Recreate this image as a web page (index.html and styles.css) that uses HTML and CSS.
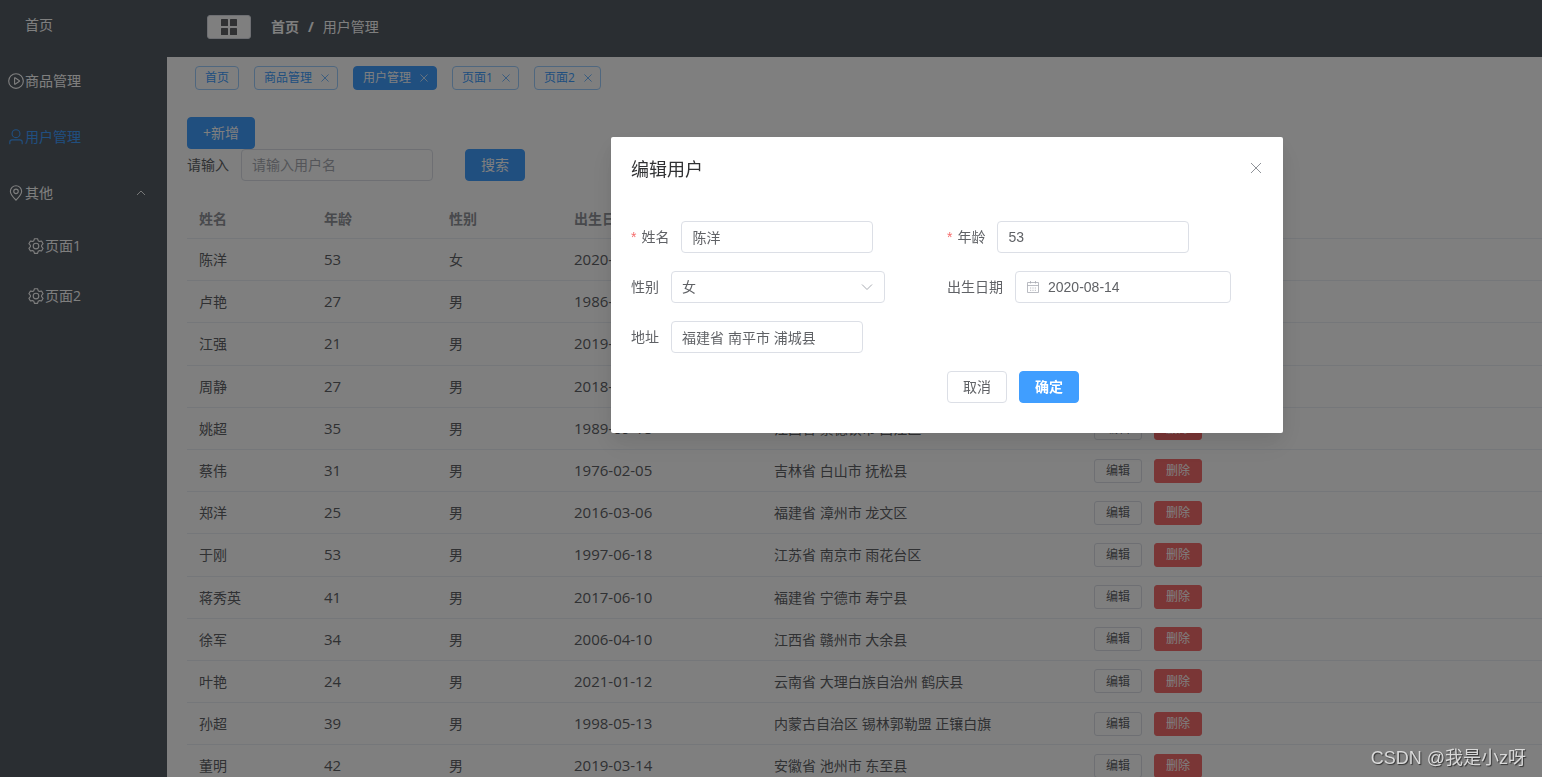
FILE: index.html
```html
<!DOCTYPE html>
<html lang="zh-CN">
<head>
<meta charset="utf-8">
<title>用户管理</title>
<link rel="stylesheet" href="styles.css">
</head>
<body>
<svg class="sprite" aria-hidden="true">
  <symbol id="i-play" viewBox="0 0 1024 1024"><path d="M512 64a448 448 0 1 1 0 896 448 448 0 0 1 0-896zm0 832a384 384 0 0 0 0-768 384 384 0 0 0 0 768zm-48-247.616L668.608 512 464 375.616v272.768zm10.624-342.656 249.472 166.336a48 48 0 0 1 0 79.872L474.624 718.272A48 48 0 0 1 400 678.336V345.6a48 48 0 0 1 74.624-39.872z"/></symbol>
  <symbol id="i-user" viewBox="0 0 1024 1024"><path d="M512 512a192 192 0 1 0 0-384 192 192 0 0 0 0 384zm0 64a256 256 0 1 1 0-512 256 256 0 0 1 0 512zm320 320v-96a96 96 0 0 0-96-96H288a96 96 0 0 0-96 96v96a32 32 0 1 1-64 0v-96a160 160 0 0 1 160-160h448a160 160 0 0 1 160 160v96a32 32 0 1 1-64 0z"/></symbol>
  <symbol id="i-location" viewBox="0 0 1024 1024"><path d="M800 416a288 288 0 1 0-576 0c0 118.144 94.528 272.128 288 456.576C705.472 688.128 800 534.144 800 416zM512 960C277.312 746.688 160 565.312 160 416a352 352 0 0 1 704 0c0 149.312-117.312 330.688-352 544z"/><path d="M512 512a96 96 0 1 0 0-192 96 96 0 0 0 0 192zm0 64a160 160 0 1 1 0-320 160 160 0 0 1 0 320z"/></symbol>
  <symbol id="i-setting" viewBox="0 0 1024 1024"><path d="M600.704 64a32 32 0 0 1 30.464 22.208l35.2 109.376c14.784 7.232 28.928 15.36 42.432 24.512l112.384-24.192a32 32 0 0 1 34.432 15.36L944.32 364.8a32 32 0 0 1-4.032 37.504l-77.12 85.12a357.12 357.12 0 0 1 0 49.024l77.12 85.248a32 32 0 0 1 4.032 37.504l-88.704 153.6a32 32 0 0 1-34.432 15.296L708.8 803.904c-13.44 9.088-27.648 17.28-42.368 24.512l-35.264 109.376A32 32 0 0 1 600.704 960H423.296a32 32 0 0 1-30.464-22.208L357.696 828.48a351.616 351.616 0 0 1-42.56-24.64l-112.32 24.256a32 32 0 0 1-34.432-15.36L79.68 659.2a32 32 0 0 1 4.032-37.504l77.12-85.248a357.12 357.12 0 0 1 0-48.896l-77.12-85.248A32 32 0 0 1 79.68 364.8l88.704-153.6a32 32 0 0 1 34.432-15.296l112.32 24.256c13.568-9.152 27.776-17.408 42.56-24.64l35.2-109.312A32 32 0 0 1 423.232 64H600.64zm-23.424 64H446.72l-36.352 113.088-24.512 11.968a294.113 294.113 0 0 0-34.816 20.096l-22.656 15.36-116.224-25.088-65.28 113.152 79.68 88.192-1.92 27.136a293.12 293.12 0 0 0 0 40.192l1.92 27.136-79.808 88.192 65.344 113.152 116.224-25.024 22.656 15.296a294.113 294.113 0 0 0 34.816 20.096l24.512 11.968L446.72 896h130.688l36.48-113.152 24.448-11.904a288.282 288.282 0 0 0 34.752-20.096l22.592-15.296 116.288 25.024 65.28-113.152-79.744-88.192 1.92-27.136a293.12 293.12 0 0 0 0-40.256l-1.92-27.136 79.808-88.128-65.344-113.152-116.288 24.96-22.592-15.232a287.616 287.616 0 0 0-34.752-20.096l-24.448-11.904L577.344 128zM512 320a192 192 0 1 1 0 384 192 192 0 0 1 0-384zm0 64a128 128 0 1 0 0 256 128 128 0 0 0 0-256z"/></symbol>
  <symbol id="i-menu" viewBox="0 0 18 18"><rect x="1" y="1" width="7" height="7" rx=".6"/><rect x="10" y="1" width="7" height="7" rx=".6"/><rect x="1" y="10" width="7" height="7" rx=".6"/><rect x="10" y="10" width="7" height="7" rx=".6"/></symbol>
  <symbol id="i-up" viewBox="0 0 12 12"><path d="M2 8l4-4 4 4" fill="none" stroke="currentColor" stroke-width=".9"/></symbol>
  <symbol id="i-down" viewBox="0 0 14 14"><path d="m2 4.500 5 5 5-5" fill="none" stroke="currentColor"/></symbol>
  <symbol id="i-close" viewBox="0 0 14 14"><path d="m2 2 10 10M12 2 2 12" fill="none" stroke="currentColor"/></symbol>
  <symbol id="i-calendar" viewBox="0 0 14 14"><path d="M1.500 2.500h11v10h-11zM1.500 5.500h11M4.500 1v2.500M9.500 1v2.500M4 8h1.200M6.400 8h1.200M8.800 8h1.200M4 10.300h1.200M6.400 10.300h1.200M8.800 10.300h1.200" fill="none" stroke="currentColor" stroke-width=".8"/></symbol>
</svg>

<div class="app">
  <nav class="sidebar">
    <a class="menu-item no-icon" href="#">首页</a>
    <a class="menu-item" href="#"><svg class="icon"><use href="#i-play"/></svg>商品管理</a>
    <a class="menu-item active" href="#"><svg class="icon"><use href="#i-user"/></svg>用户管理</a>
    <button class="menu-item group" type="button"><svg class="icon"><use href="#i-location"/></svg>其他<svg class="arrow"><use href="#i-up"/></svg></button>
    <div class="submenu">
      <a class="menu-item" href="#"><svg class="icon"><use href="#i-setting"/></svg>页面1</a>
      <a class="menu-item" href="#"><svg class="icon"><use href="#i-setting"/></svg>页面2</a>
    </div>
  </nav>

  <div class="content">
    <header class="topbar">
      <button class="collapse" type="button" aria-label="折叠菜单"><svg class="icon"><use href="#i-menu"/></svg></button>
      <div class="breadcrumb"><a href="#">首页</a><span class="slash">/</span><span>用户管理</span></div>
    </header>

    <div class="tags">
      <a class="tag" href="#">首页</a>
      <a class="tag" href="#">商品管理<svg class="tag-close"><use href="#i-close"/></svg></a>
      <a class="tag current" href="#">用户管理<svg class="tag-close"><use href="#i-close"/></svg></a>
      <a class="tag" href="#">页面1<svg class="tag-close"><use href="#i-close"/></svg></a>
      <a class="tag" href="#">页面2<svg class="tag-close"><use href="#i-close"/></svg></a>
    </div>

    <main class="main">
      <button class="btn primary" type="button">+新增</button>
      <form class="search">
        <label for="keyword">请输入</label>
        <input class="input" id="keyword" type="text" placeholder="请输入用户名">
        <button class="btn primary" type="button">搜索</button>
      </form>

      <table class="table">
        <colgroup><col class="c-s"><col class="c-s"><col class="c-s"><col class="c-m"><col class="c-l"><col></colgroup>
        <thead><tr><th>姓名</th><th>年龄</th><th>性别</th><th>出生日期</th><th>地址</th><th>操作</th></tr></thead>
        <tbody>
          <tr><td>陈洋</td><td class="num">53</td><td>女</td><td class="num">2020-08-14</td><td>福建省 南平市 浦城县</td><td><div class="ops"><button class="btn small" type="button">编辑</button><button class="btn small danger" type="button">删除</button></div></td></tr>
          <tr><td>卢艳</td><td class="num">27</td><td>男</td><td class="num">1986-05-12</td><td>江苏省 南京市 玄武区</td><td><div class="ops"><button class="btn small" type="button">编辑</button><button class="btn small danger" type="button">删除</button></div></td></tr>
          <tr><td>江强</td><td class="num">21</td><td>男</td><td class="num">2019-07-21</td><td>福建省 漳州市 东山县</td><td><div class="ops"><button class="btn small" type="button">编辑</button><button class="btn small danger" type="button">删除</button></div></td></tr>
          <tr><td>周静</td><td class="num">27</td><td>男</td><td class="num">2018-11-02</td><td>江西省 赣州市 信丰县</td><td><div class="ops"><button class="btn small" type="button">编辑</button><button class="btn small danger" type="button">删除</button></div></td></tr>
          <tr><td>姚超</td><td class="num">35</td><td>男</td><td class="num">1989-09-18</td><td>江西省 景德镇市 昌江区</td><td><div class="ops"><button class="btn small" type="button">编辑</button><button class="btn small danger" type="button">删除</button></div></td></tr>
          <tr><td>蔡伟</td><td class="num">31</td><td>男</td><td class="num">1976-02-05</td><td>吉林省 白山市 抚松县</td><td><div class="ops"><button class="btn small" type="button">编辑</button><button class="btn small danger" type="button">删除</button></div></td></tr>
          <tr><td>郑洋</td><td class="num">25</td><td>男</td><td class="num">2016-03-06</td><td>福建省 漳州市 龙文区</td><td><div class="ops"><button class="btn small" type="button">编辑</button><button class="btn small danger" type="button">删除</button></div></td></tr>
          <tr><td>于刚</td><td class="num">53</td><td>男</td><td class="num">1997-06-18</td><td>江苏省 南京市 雨花台区</td><td><div class="ops"><button class="btn small" type="button">编辑</button><button class="btn small danger" type="button">删除</button></div></td></tr>
          <tr><td>蒋秀英</td><td class="num">41</td><td>男</td><td class="num">2017-06-10</td><td>福建省 宁德市 寿宁县</td><td><div class="ops"><button class="btn small" type="button">编辑</button><button class="btn small danger" type="button">删除</button></div></td></tr>
          <tr><td>徐军</td><td class="num">34</td><td>男</td><td class="num">2006-04-10</td><td>江西省 赣州市 大余县</td><td><div class="ops"><button class="btn small" type="button">编辑</button><button class="btn small danger" type="button">删除</button></div></td></tr>
          <tr><td>叶艳</td><td class="num">24</td><td>男</td><td class="num">2021-01-12</td><td>云南省 大理白族自治州 鹤庆县</td><td><div class="ops"><button class="btn small" type="button">编辑</button><button class="btn small danger" type="button">删除</button></div></td></tr>
          <tr><td>孙超</td><td class="num">39</td><td>男</td><td class="num">1998-05-13</td><td>内蒙古自治区 锡林郭勒盟 正镶白旗</td><td><div class="ops"><button class="btn small" type="button">编辑</button><button class="btn small danger" type="button">删除</button></div></td></tr>
          <tr><td>董明</td><td class="num">42</td><td>男</td><td class="num">2019-03-14</td><td>安徽省 池州市 东至县</td><td><div class="ops"><button class="btn small" type="button">编辑</button><button class="btn small danger" type="button">删除</button></div></td></tr>
        </tbody>
      </table>
    </main>
  </div>
</div>

<div class="overlay">
  <section class="dialog" role="dialog" aria-labelledby="dialog-title">
    <header class="dialog-head">
      <h2 id="dialog-title">编辑用户</h2>
      <button class="dialog-close" type="button" aria-label="关闭"><svg class="icon"><use href="#i-close"/></svg></button>
    </header>
    <form class="dialog-form">
      <div class="field"><label class="required" for="name">姓名</label><input class="input" id="name" type="text" value="陈洋"></div>
      <div class="field"><label class="required" for="age">年龄</label><input class="input" id="age" type="text" value="53"></div>
      <div class="field"><label for="sex">性别</label>
        <div class="select-box"><select class="input" id="sex"><option>女</option><option>男</option></select><svg class="select-arrow"><use href="#i-down"/></svg></div>
      </div>
      <div class="field"><label for="birth">出生日期</label>
        <div class="input date-box"><svg class="date-icon"><use href="#i-calendar"/></svg><input id="birth" type="text" value="2020-08-14"></div>
      </div>
      <div class="field address"><label for="addr">地址</label><input class="input" id="addr" type="text" value="福建省 南平市 浦城县"></div>
      <div class="actions"><button class="btn" type="button">取消</button><button class="btn primary confirm" type="button">确定</button></div>
    </form>
  </section>
</div>
<div class="watermark">CSDN @我是小z呀</div>
</body>
</html>
```

FILE: styles.css
```css
* { box-sizing: border-box; }
html, body { height: 100%; margin: 0; }
body {
  overflow: hidden;
  font: 14px/20px "Open Sans", "Noto Sans CJK SC", sans-serif;
  color: #606266;
  background: #fff;
}
a { color: inherit; text-decoration: none; }
button, input, select { font: inherit; color: inherit; margin: 0; }
button { cursor: pointer; }
svg { flex: none; fill: currentColor; }
.sprite { position: absolute; width: 0; height: 0; }
.icon { width: 18px; height: 18px; }

.app { display: flex; height: 100%; }

/* sidebar */
.sidebar { flex: none; width: 167px; background: #545c64; color: #fff; }
.menu-item {
  display: flex;
  align-items: center;
  width: 100%;
  height: 50px;
  margin-bottom: 6px;
  padding: 0 20px 0 7px;
  border: 0;
  background: none;
}
.menu-item.no-icon { padding-left: 25px; }
.menu-item.active { color: #409eff; }
.menu-item.group { margin-bottom: 3px; }
.arrow { width: 12px; height: 12px; margin-left: auto; }
.submenu .menu-item { margin: 0; padding-left: 27px; }

/* top bar */
.content { flex: 1; min-width: 0; display: flex; flex-direction: column; }
.topbar {
  flex: none;
  display: flex;
  align-items: center;
  gap: 20px;
  height: 57px;
  padding: 0 40px 3px;
  background: #545c64;
  color: #fff;
}
.collapse {
  display: flex;
  align-items: center;
  justify-content: center;
  width: 44px;
  height: 24px;
  padding: 0;
  border: 1px solid #dcdfe6;
  border-radius: 3px;
  background: #fff;
  color: #606266;
}
.breadcrumb { display: flex; }
.breadcrumb a, .slash { font-weight: 700; }
.slash { margin: 0 9px; }

/* page tags */
.tags { flex: none; display: flex; gap: 15px; padding: 9px 28px 0; }
.tag {
  display: flex;
  align-items: center;
  gap: 8px;
  height: 24px;
  padding: 0 9px;
  border: 1px solid #9fceff;
  border-radius: 4px;
  font-size: 12px;
  color: #409eff;
}
.tag:not(:first-child) { padding-right: 7px; }
.tag.current { background: #409eff; border-color: #409eff; color: #fff; }
.tag-close { width: 10px; height: 10px; }

/* controls */
.btn {
  display: inline-flex;
  flex: none;
  align-items: center;
  justify-content: center;
  height: 32px;
  padding: 0 15px;
  border: 1px solid #dcdfe6;
  border-radius: 4px;
  background: #fff;
  vertical-align: middle;
}
.btn.primary { background: #409eff; border-color: #409eff; color: #fff; }
.btn.confirm { font-weight: 700; }
.btn.small { height: 24px; padding: 0 11px; border-radius: 3px; font-size: 12px; }
.btn.danger { background: #f56c6c; border-color: #f56c6c; color: #fff; }
.btn + .btn { margin-left: 12px; }
.input {
  width: 192px;
  height: 32px;
  padding: 0 10px;
  border: 1px solid #dcdfe6;
  border-radius: 4px;
  background: #fff;
  font-family: "Liberation Sans", "Noto Sans CJK SC", sans-serif;
}
.input::placeholder { color: #a8abb2; opacity: 1; }

/* user list */
.main { flex: 1; min-height: 0; padding: 27px 0 0 20px; display: flex; flex-direction: column; align-items: flex-start; }
.search { display: flex; flex: none; align-items: center; margin-bottom: 18px; }
.search .input { margin: 0 32px 0 12px; }
.table { flex: none; width: 100%; table-layout: fixed; border-collapse: separate; border-spacing: 0; }
.c-s { width: 125px; }
.c-m { width: 200px; }
.c-l { width: 320px; }
.table th, .table td { padding: 8px 12px; border-bottom: 1px solid #ebeef5; text-align: left; vertical-align: middle; }
.table th { line-height: 23px; color: #909399; }
.table td { line-height: 1.8; }
.table .num { font-size: 15px; line-height: 1; }
.ops { display: flex; }

/* edit dialog */
.overlay { position: fixed; inset: 0; background: rgba(0, 0, 0, .5); }
.dialog {
  width: 672px;
  margin: 137px 259px 0 auto;
  border-radius: 2px;
  background: #fff;
  box-shadow: 0 12px 32px 4px rgba(0, 0, 0, .04), 0 8px 20px rgba(0, 0, 0, .08);
}
.dialog-head { display: flex; align-items: center; justify-content: space-between; padding: 20px 20px 10px; }
.dialog-head h2 { margin: 0; font-size: 18px; line-height: 24px; font-weight: 400; color: #303133; }
.dialog-close { display: flex; padding: 0 0 2px; border: 0; background: none; color: #909399; }
.dialog-close .icon { width: 14px; height: 14px; }
.dialog-form { display: grid; grid-template-columns: 1fr 1fr; row-gap: 18px; padding: 30px 20px; }
.field { display: flex; align-items: center; gap: 12px; }
.required::before { content: "*"; margin-right: 5px; color: #f56c6c; font-family: "Liberation Sans", sans-serif; }
.address { grid-column: 1 / -1; }
.select-box { display: grid; align-items: center; width: 214px; }
.select-box > * { grid-area: 1 / 1; }
.select-box .input { width: 100%; appearance: none; }
.select-arrow { width: 14px; height: 14px; margin-right: 11px; justify-self: end; color: #a8abb2; pointer-events: none; }
.date-box { display: flex; align-items: center; gap: 8px; width: 216px; }
.date-icon { width: 14px; height: 14px; color: #a8abb2; }
.date-box input { flex: 1; min-width: 0; padding: 0; border: 0; background: none; outline: 0; }
.actions { grid-column: 2; }

.watermark {
  position: fixed;
  right: 16px;
  bottom: 6px;
  font: 18px/26px "Liberation Sans", "Noto Sans CJK SC", sans-serif;
  color: #d9d9d9;
  text-shadow: 1px 1px 1px #333;
}
```
